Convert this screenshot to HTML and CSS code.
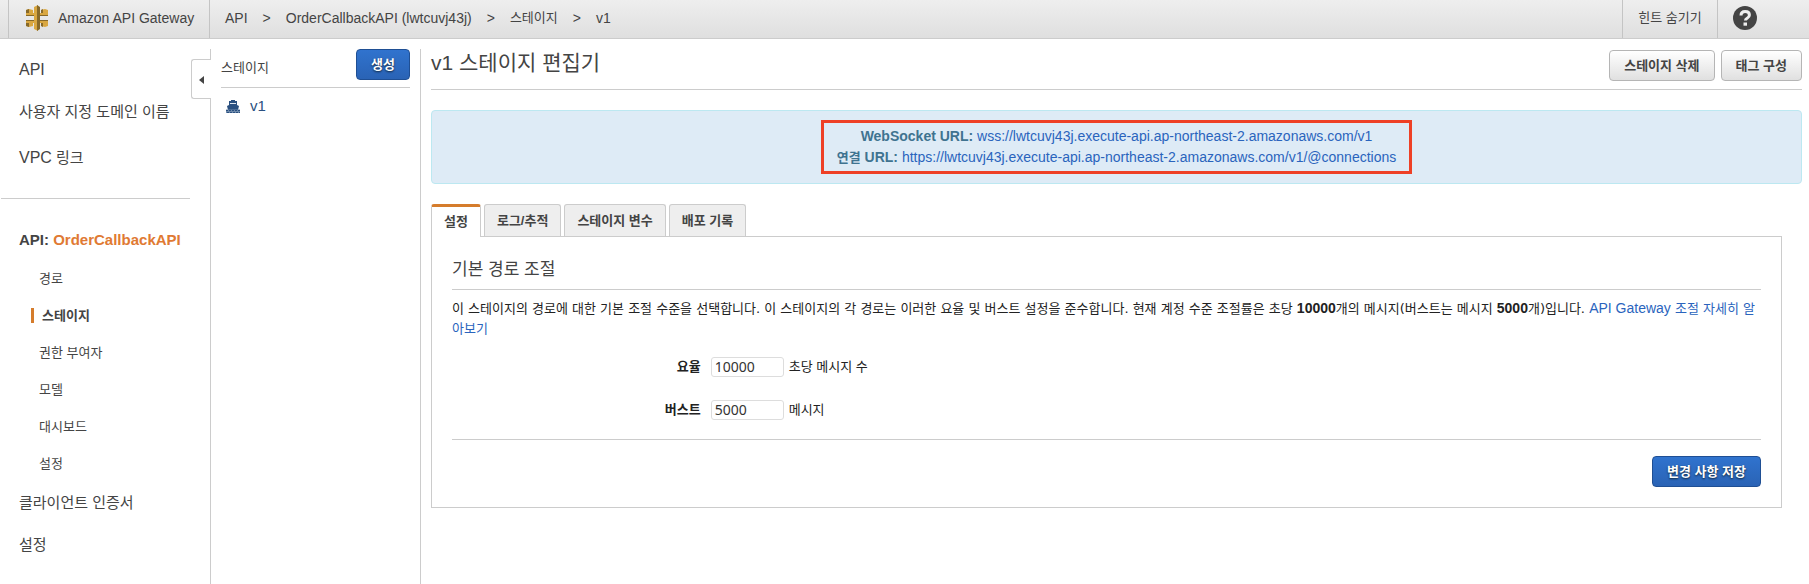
FILE: index.html
```html
<!DOCTYPE html>
<html lang="ko">
<head>
<meta charset="utf-8">
<title>Amazon API Gateway</title>
<link rel="stylesheet" href="styles.css">
</head>
<body>
<header class="topbar">
  <a class="brand" href="#">
    <svg class="brand-icon" viewBox="0 0 22 26" aria-hidden="true">
      <path fill="#d9a741" d="M3 4l4 1v3h8V5l4-1 3 1v6H0V5zM0 15h22v6l-3 1-4-1v-3H7v3l-4 1-3-1z"/>
      <path fill="#876929" d="M0 5l3-1v4H0zM0 21l3 1v-4H0zM0 10h8v1H0zM0 15h8v1H0zM14 10h8v1h-8zM14 15h8v1h-8zM15 5l2-1v4h-2zM15 18h2v4l-2-1z"/>
      <path fill="#d9a741" d="M8 2l4-2v26l-4-2z"/>
      <path fill="#876929" d="M11 0l3 2v22l-3 2z"/>
    </svg>
    <span>Amazon API Gateway</span>
  </a>
  <nav class="crumbs" aria-label="breadcrumb">
    <a href="#">API</a><span>&gt;</span>
    <a href="#">OrderCallbackAPI (lwtcuvj43j)</a><span>&gt;</span>
    <a class="ko" href="#">스테이지</a><span>&gt;</span>
    <a href="#">v1</a>
  </nav>
  <button class="hint ko" type="button">힌트 숨기기</button>
  <button class="help" type="button" aria-label="도움말">
    <svg viewBox="0 0 24 24" aria-hidden="true">
      <circle cx="12" cy="12" r="12" fill="#444"/>
      <path d="M8 9.500q0-4 4.200-4t4.200 3.500q0 1.800-2 3-2 1.100-2 2.600" fill="none" stroke="#eee" stroke-width="3"/>
      <path d="M10.500 16.500h3.500v3.200h-3.500z" fill="#eee"/>
    </svg>
  </button>
</header>
<main class="layout">
  <aside class="sidebar">
    <button class="collapse" type="button" aria-label="메뉴 접기">
      <svg viewBox="0 0 5 8" aria-hidden="true"><path d="M5 0v8L0 4z" fill="#444"/></svg>
    </button>
    <nav class="nav">
      <a class="latin" href="#">API</a>
      <a href="#">사용자 지정 도메인 이름</a>
      <a class="spaced" href="#"><span class="latin">VPC</span> 링크</a>
    </nav>
    <hr class="nav-rule">
    <div class="api-name">API: <a href="#">OrderCallbackAPI</a></div>
    <nav class="subnav">
      <a href="#">경로</a>
      <a class="current" href="#">스테이지</a>
      <a href="#">권한 부여자</a>
      <a href="#">모델</a>
      <a href="#">대시보드</a>
      <a href="#">설정</a>
    </nav>
    <nav class="nav">
      <a href="#">클라이언트 인증서</a>
      <a href="#">설정</a>
    </nav>
  </aside>
  <section class="stages">
    <div class="stages-head">
      <span class="ko">스테이지</span>
      <button class="btn primary" type="button">생성</button>
    </div>
    <a class="stage" href="#">
      <svg viewBox="0 0 14 13" aria-hidden="true">
        <path fill="#2a5080" d="M5 0h4v1h2v4l2 1-1 4H2L1 6l2-1V1h2z"/>
        <path fill="#dde5ee" d="M4 3h6v1H4z"/>
        <path fill="#6d89aa" d="M0 9.500h14V13H0z"/>
        <path stroke="#2a5080" d="M0 10.500h14M1 12.500h13" stroke-dasharray="2 1"/>
      </svg>
      <span>v1</span>
    </a>
  </section>
  <section class="editor">
    <div class="editor-head">
      <h1>v1 스테이지 편집기</h1>
      <div class="actions">
        <button class="btn" type="button">스테이지 삭제</button>
        <button class="btn" type="button">태그 구성</button>
      </div>
    </div>
    <div class="notice">
      <div class="urls">
        <div><strong>WebSocket URL:</strong> <a href="#">wss://lwtcuvj43j.execute-api.ap-northeast-2.amazonaws.com/v1</a></div>
        <div><strong><span class="ko">연결</span> URL:</strong> <a href="#">https://lwtcuvj43j.execute-api.ap-northeast-2.amazonaws.com/v1/@connections</a></div>
      </div>
    </div>
    <div class="tabs" role="tablist">
      <button class="tab active" type="button" role="tab" aria-selected="true">설정</button>
      <button class="tab" type="button" role="tab">로그/추적</button>
      <button class="tab" type="button" role="tab">스테이지 변수</button>
      <button class="tab" type="button" role="tab">배포 기록</button>
    </div>
    <form class="panel">
      <h2>기본 경로 조절</h2>
      <p>이 스테이지의 경로에 대한 기본 조절 수준을 선택합니다. 이 스테이지의 각 경로는 이러한 요율 및 버스트 설정을 준수합니다. 현재 계정 수준 조절률은 초당 <strong>10000</strong>개의 메시지(버스트는 메시지 <strong>5000</strong>개)입니다. <a href="#"><span class="latin">API Gateway</span> 조절 자세히 알아보기</a></p>
      <div class="field">
        <label for="rate">요율</label>
        <input id="rate" type="text" value="10000">
        <span>초당 메시지 수</span>
      </div>
      <div class="field">
        <label for="burst">버스트</label>
        <input id="burst" type="text" value="5000">
        <span>메시지</span>
      </div>
      <div class="panel-foot">
        <button class="btn primary" type="button">변경 사항 저장</button>
      </div>
    </form>
  </section>
</main>
</body>
</html>
```
FILE: styles.css
```css
* { box-sizing: border-box; }
body {
  margin: 0;
  background: #fff;
  color: #444;
  font: 14px/20px "Liberation Sans", "Noto Sans CJK KR", sans-serif;
}
a { color: inherit; text-decoration: none; }
button { font: inherit; color: inherit; cursor: pointer; }
.ko { font-size: 13px; }

.topbar {
  display: flex;
  height: 39px;
  padding-left: 8px;
  background: linear-gradient(#eee, #dfdfdf);
  border-bottom: 1px solid #ccc;
}
.brand {
  display: flex;
  align-items: center;
  gap: 10px;
  width: 202px;
  padding: 0 0 2px 17px;
  border: solid #c4c4c4;
  border-width: 0 1px;
}
.brand-icon { width: 22px; height: 26px; }
.crumbs {
  display: flex;
  align-items: center;
  gap: 15px;
  flex: 1;
  padding: 0 0 2px 15px;
}
.hint, .help {
  border: 0;
  border-left: 1px solid #c4c4c4;
  background: none;
  padding: 0 15px 2px;
}
.hint { width: 95px; white-space: nowrap; }
.help { width: 92px; text-align: left; }
.help svg { display: block; width: 24px; height: 24px; }

.layout {
  display: grid;
  grid-template-columns: 211px 210px minmax(0, 1fr);
  min-height: calc(100vh - 39px);
  padding-top: 10px;
}
.sidebar { position: relative; border-right: 1px solid #ccc; }
.collapse {
  position: absolute;
  top: 10px;
  right: -1px;
  display: flex;
  align-items: center;
  width: 20px;
  height: 40px;
  padding: 2px 0 0 7px;
  background: #fff;
  border: 1px solid #ccc;
  border-right: 0;
  border-radius: 3px 0 0 3px;
}
.collapse svg { width: 5px; height: 8px; }
.nav a { display: block; height: 42px; padding-left: 19px; font-size: 15px; line-height: 41px; }
.nav .latin { font-size: 16px; }
.nav .spaced { margin-top: 4px; }
.nav-rule { margin: 19px 20px 31px 1px; border: 0; border-top: 1px solid #ccc; }
.api-name { padding-left: 19px; font-size: 15px; font-weight: bold; }
.api-name a { color: #e07a33; }
.subnav { padding: 10px 0 0 39px; font-size: 13px; line-height: 37px; }
.subnav a { display: flex; align-items: center; }
.subnav .current { margin-left: -8px; font-weight: bold; }
.current::before { content: ""; width: 3px; height: 15px; margin-right: 8px; background: #d57c2c; }

.stages { padding: 0 10px; border-right: 1px solid #ccc; }
.stages-head {
  display: flex;
  align-items: flex-start;
  justify-content: space-between;
  height: 39px;
  border-bottom: 1px solid #ccc;
}
.stages-head .ko { line-height: 38px; }
.stage { display: flex; align-items: center; gap: 10px; padding: 8px 5px; color: #2a5080; font-size: 15px; }
.stage svg { width: 14px; height: 13px; }

.btn {
  height: 31px;
  padding: 0 14px;
  border: 1px solid #b5b5b5;
  border-radius: 4px;
  background: linear-gradient(#fff, #e0e0e0);
  font-size: 13px;
  font-weight: bold;
  white-space: nowrap;
}
.primary {
  border-color: #1f4f94;
  background: linear-gradient(#3073ce, #2a63b5);
  color: #fff;
  text-shadow: 0 1px 2px #123;
}

.editor { padding: 0 7px 20px 10px; }
.editor-head { display: flex; justify-content: space-between; height: 41px; border-bottom: 1px solid #ccc; }
h1 { margin: 0; font-size: 21px; font-weight: normal; line-height: 28px; }
.actions { display: flex; gap: 6px; padding-top: 1px; }
.notice {
  display: flex;
  justify-content: center;
  margin-top: 20px;
  padding: 9px;
  background: #deebf6;
  border: 1px solid #bce8f1;
  border-radius: 4px;
  line-height: 21px;
  text-align: center;
}
.urls { padding: 3px 13px; border: 3px solid #ee4026; }
.urls strong { color: #3f7390; }
.urls a, .panel a { color: #2a64bd; }

.tabs { display: flex; gap: 3px; margin-top: 20px; }
.tab {
  height: 32px;
  padding: 0 12px;
  background: #eee;
  border: 1px solid #ccc;
  border-bottom: 0;
  border-radius: 3px 3px 0 0;
  font-size: 13px;
  font-weight: bold;
}
.active {
  position: relative;
  height: 33px;
  margin-bottom: -1px;
  background: #fff;
  border-top: 3px solid #d57c2c;
}
.panel { margin-right: 20px; padding: 20px; border: 1px solid #ccc; color: #222; font-size: 13px; }
h2 {
  margin: 0 0 9px;
  padding: 1px 0 7px;
  border-bottom: 1px solid #ccc;
  color: #444;
  font-size: 17px;
  font-weight: normal;
  line-height: 24px;
}
.panel p {
  margin: 0 0 16px;
  font-family: "DejaVu Sans", "Noto Sans CJK KR", sans-serif;
  word-break: break-all;
}
.panel p strong, .panel .latin { font-family: "Liberation Sans", sans-serif; font-size: 14px; line-height: 1; }
.field { display: flex; align-items: center; height: 23px; margin-bottom: 20px; }
.field label { width: 19%; margin-right: 10px; text-align: right; font-weight: bold; }
.field input {
  width: 73px;
  height: 20px;
  margin-right: 5px;
  padding: 0 3px;
  border: 1px solid #ddd;
  border-radius: 3px;
  color: #333;
  font: 14px "Noto Sans", sans-serif;
}
.panel-foot {
  display: flex;
  justify-content: flex-end;
  margin-top: -2px;
  padding-top: 16px;
  border-top: 1px solid #ccc;
}
```
